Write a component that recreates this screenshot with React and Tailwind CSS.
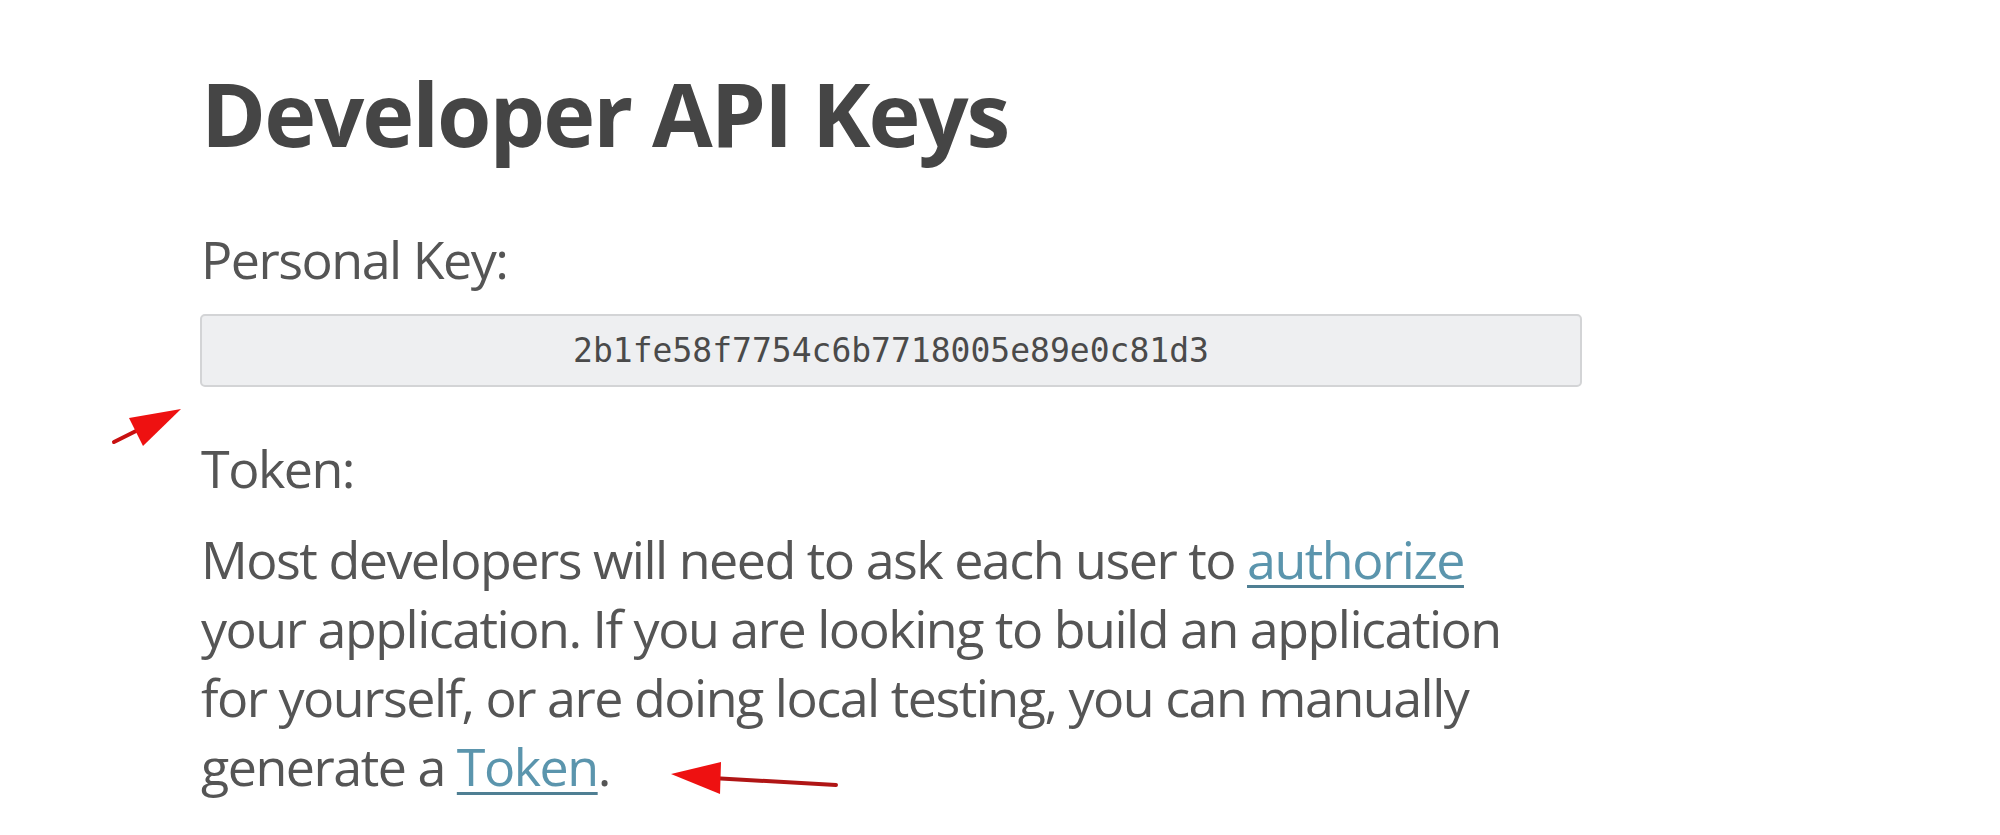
import React from "react";

export default function App() {
  return (
    <div className="relative w-[2000px] h-[835px] bg-white overflow-hidden" style={{ fontFamily: "'Open Sans', 'Noto Sans', sans-serif" }}>
      <div className="pl-[201px] pt-[63px] flex flex-col">
        <h1 className="text-[88px] leading-[100px] font-bold text-[#454545] tracking-[-2px]">Developer API Keys</h1>
        <div className="mt-[66px] text-[52px] leading-[60px] font-normal text-[#555] tracking-[-1.5px]">Personal Key:</div>
        <div className="mt-[25px] w-[1382px] h-[73px] -ml-[1px] rounded-[5px] border-2 border-[#d3d4d6] bg-[#eeeff1] flex items-center justify-center">
          <span className="text-[33px] text-[#4a4a4a]" style={{ fontFamily: "'DejaVu Sans Mono', monospace" }}>2b1fe58f7754c6b7718005e89e0c81d3</span>
        </div>
        <div className="mt-[51px] text-[52px] leading-[60px] font-normal text-[#555] tracking-[-1.5px]">Token:</div>
        <p className="mt-[26px] text-[52px] leading-[69px] font-normal text-[#555] tracking-[-1.5px]">
          Most developers will need to ask each user to{" "}
          <a className="text-[#5b95ad] underline decoration-[3px] decoration-[#4f7f93] underline-offset-[6px]">authorize</a>
          <br />
          your application. If you are looking to build an application
          <br />
          for yourself, or are doing local testing, you can manually
          <br />
          generate a <a className="text-[#5b95ad] underline decoration-[3px] decoration-[#4f7f93] underline-offset-[6px]">Token</a>.
        </p>
      </div>
      <svg className="absolute left-0 top-0" width="2000" height="835" viewBox="0 0 2000 835">
        <line x1="114" y1="442" x2="138" y2="430" stroke="#c81010" strokeWidth="4" strokeLinecap="round" />
        <polygon points="181,409 129,418 143,446" fill="#ee1111" />
        <line x1="712" y1="778" x2="836" y2="785" stroke="#b01515" strokeWidth="4" strokeLinecap="round" />
        <polygon points="671,774 721,762 720,794" fill="#ee1111" />
      </svg>
    </div>
  );
}
